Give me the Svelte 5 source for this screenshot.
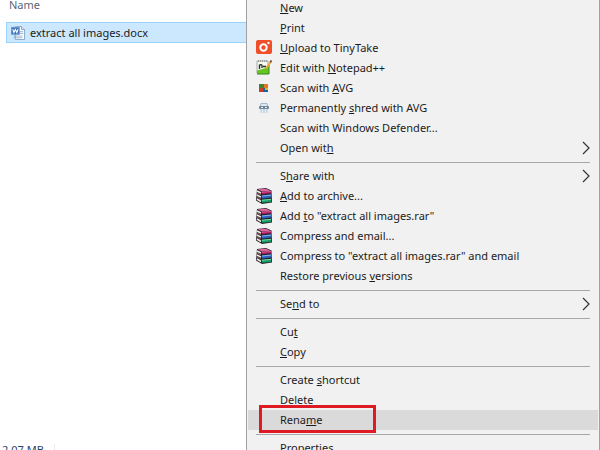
<script>
    // The access key of each label is wrapped in underscores
    const groups = [
        [
            { label: "_N_ew" },
            { label: "_P_rint" },
            { label: "_U_pload to TinyTake", icon: "tinytake" },
            { label: "Edit with _N_otepad++", icon: "notepad" },
            { label: "Scan with _A_VG", icon: "avg" },
            { label: "Permanently _s_hred with AVG", icon: "shred" },
            { label: "Scan with Windows Defender..." },
            { label: "Open wit_h_", submenu: true },
        ],
        [
            { label: "S_h_are with", submenu: true },
            { label: "_A_dd to archive...", icon: "rar" },
            { label: 'Add _t_o "extract all images.rar"', icon: "rar" },
            { label: "Compress and email...", icon: "rar" },
            { label: 'Compress to "extract all images.rar" and email', icon: "rar" },
            { label: "Restore previous _v_ersions" },
        ],
        [{ label: "Se_n_d to", submenu: true }],
        [{ label: "Cu_t_" }, { label: "_C_opy" }],
        [
            { label: "Create _s_hortcut" },
            { label: "_D_elete" },
            { label: "Rena_m_e", active: true },
        ],
        [{ label: "P_r_operties" }],
    ];
</script>

<div class="window">
    <main class="files">
        <div class="column-head">Name</div>
        <button class="file">
            <svg class="doc" viewBox="0 0 16 16" aria-hidden="true">
                <path d="M5 .5h7l3.500 3.500v11.500H5z" fill="#fff" stroke="#7f9fc4" />
                <path d="M12 .5V4h3.500" fill="#dce8f6" stroke="#7f9fc4" />
                <path d="M10 6.500h4M10 8.500h4M3 11.500h10M3 13.500h10" stroke="#8eacd2" />
                <rect x=".5" y="1.500" width="9" height="8" fill="#3c73b9" stroke="#6d98cd" />
                <path d="M2 3.500l1.300 4L5 4l1.700 3.500L8 3.500" fill="none" stroke="#fff" stroke-width="1.200" />
            </svg>
            <span>extract all images.docx</span>
        </button>
        <footer class="status">
            <span>2.07 MB</span>
            <i></i>
        </footer>
    </main>

    <div class="menu" role="menu">
        {#each groups as group, i}
            {#if i > 0}<hr />{/if}
            {#each group as item}
                <button class="item" class:active={item.active} role="menuitem">
                    <span class="icon">
                        {#if item.icon === "tinytake"}
                            <svg viewBox="0 0 16 16" aria-hidden="true">
                                <rect width="16" height="14" rx="2" fill="#f04e2b" />
                                <circle cx="7.500" cy="7.500" r="3.200" fill="none" stroke="#fff" stroke-width="2" />
                                <circle cx="12.500" cy="3" r="1.200" fill="#fff" />
                            </svg>
                        {:else if item.icon === "notepad"}
                            <svg viewBox="0 0 16 16" aria-hidden="true">
                                <path d="M1 1h11v12H1z" fill="#f8faf0" stroke="#a5aaa0" />
                                <path d="M1 10.500l12-3.500v7H1z" fill="#67c51f" />
                                <path d="M1 14h12V5" fill="none" stroke="#398424" />
                                <path d="M2 1h10" stroke="#6e7475" stroke-dasharray="1 1" />
                                <path d="M3.500 9V4.500M3.500 5.500c2-2 3-.5 2.500 2.500M7 6.500h3" fill="none" stroke="#273029" stroke-width="1.400" />
                                <path d="M15 1.500l-5 7" stroke="#e5a52d" stroke-width="1.800" />
                                <path d="M15.500.5l-1.200 1.800" stroke="#754135" stroke-width="1.800" />
                            </svg>
                        {:else if item.icon === "avg"}
                            <svg viewBox="0 0 16 16" aria-hidden="true">
                                <path d="M3 4h5v4H3z" fill="#43812f" />
                                <path d="M8 4h4v5H8z" fill="#e47725" />
                                <path d="M3 8h4v4H3z" fill="#c63e2a" />
                                <path d="M7 8h5v4H7z" fill="#1764a2" />
                                <path d="M9 8h3v2H9z" fill="#e8b51f" />
                            </svg>
                        {:else if item.icon === "shred"}
                            <svg viewBox="0 0 16 16" aria-hidden="true">
                                <path d="M5 3.500h6l1 3H4z" fill="#dfe9f1" stroke="#a5b6c5" />
                                <rect x="3" y="6" width="10" height="3" rx="1" fill="#71879a" />
                                <path d="M5 7.500h2M9 7.500h2" stroke="#e7f0f6" />
                                <path d="M4 9h8l-.8 4H4.800z" fill="#c3d3e2" />
                                <path d="M6.500 9v4M9.500 9v4" stroke="#eef4f8" />
                            </svg>
                        {:else if item.icon === "rar"}
                            <svg viewBox="0 0 16 16" aria-hidden="true">
                                <path d="M1 1l9-1 5.500 2.500.5 12L6 16 0 12.500z" fill="#2b2230" />
                                <path d="M1.500 1.300L10 .7l4.500 2-8.500.8z" fill="#e0669f" />
                                <path d="M6 4l9-.8v2L6 6z" fill="#b81f68" />
                                <path d="M6 4.200l9-.8" stroke="#f08ab8" stroke-width=".6" />
                                <path d="M6 7.500l9-.9v3L6 10.400z" fill="#2c62bd" />
                                <path d="M6 8l9-.9" stroke="#83b5ec" />
                                <path d="M6 11.800l9-.9v3L6 14.800z" fill="#129a62" />
                                <path d="M6 12.300l9-.9" stroke="#6ce0a8" />
                                <path d="M1 3l4 2M1 7l4 2.200M1 11l4 2.500" stroke="#f1ecdf" stroke-width="1.500" />
                                <path d="M1 4.800l4 2M1 8.800l4 2.200" stroke="#a8706a" stroke-width=".8" />
                            </svg>
                        {/if}
                    </span>
                    <span class="label">
                        {#each item.label.split("_") as part, n}{#if n === 1}<u>{part}</u>{:else}{part}{/if}{/each}
                    </span>
                    {#if item.submenu}
                        <svg class="chevron" viewBox="0 0 8 14" aria-hidden="true">
                            <path d="M1 1l6 6-6 6" fill="none" stroke="#333" stroke-width="1.200" />
                        </svg>
                    {/if}
                    {#if item.active}<span class="highlight-box"></span>{/if}
                </button>
            {/each}
        {/each}
    </div>
</div>

<style>
    :global(body) {
        background: #fff;
    }

    .window {
        display: grid;
        grid-template-columns: 41% 1fr;
        height: 100vh;
        overflow: hidden;
        font-family: "Noto Sans", "Open Sans", sans-serif;
        font-size: 11px;
        line-height: 20px;
        color: #1c1c1c;
    }

    button {
        font: inherit;
        color: inherit;
        text-align: left;
        border: 0;
        background: none;
    }

    .files {
        display: flex;
        flex-direction: column;
        min-width: 0;
        height: 100vh;
    }

    .column-head {
        height: 22px;
        padding-left: 9px;
        font-size: 11px;
        line-height: 10px;
        color: #5a6678;
    }

    .file {
        display: flex;
        align-items: center;
        gap: 4px;
        height: 21px;
        margin-left: 6px;
        padding: 0 3px;
        border: 1px solid #99d1ff;
        border-right: 0;
        background: #cce8ff;
        white-space: nowrap;
    }

    .doc {
        width: 16px;
        height: 14px;
    }

    .status {
        display: flex;
        gap: 10px;
        height: 6px;
        margin-top: auto;
        padding-left: 2px;
        font-size: 11px;
        line-height: 12px;
        color: #2a4466;
    }

    .status i {
        border-left: 1px solid #e8ecf2;
    }

    .menu {
        display: flex;
        flex-direction: column;
        height: max-content;
        margin-top: -2px;
        padding: 0 1px;
        border: solid #a0a0a0;
        border-width: 0 1px;
        background: #f1f1f1;
    }

    .menu hr {
        width: auto;
        height: 1px;
        margin: 4px 8px 3px;
        border: 0;
        background: #a8a8a8;
    }

    .item {
        position: relative;
        display: flex;
        align-items: center;
        gap: 8px;
        height: 20px;
        padding: 0 8px;
        white-space: nowrap;
    }

    .item:hover,
    .item.active {
        background: #dadada;
    }

    .icon,
    .icon svg {
        display: block;
        width: 16px;
        height: 16px;
    }

    .label {
        flex: 1;
    }

    .label u {
        text-underline-offset: 1px;
        text-decoration-skip-ink: none;
    }

    .chevron {
        width: 8px;
        height: 14px;
    }

    /* Marks the command to click */
    .highlight-box {
        position: absolute;
        top: -5px;
        left: 11px;
        box-sizing: border-box;
        width: 117px;
        height: 28px;
        border: 3px solid #de1a24;
    }
</style>
